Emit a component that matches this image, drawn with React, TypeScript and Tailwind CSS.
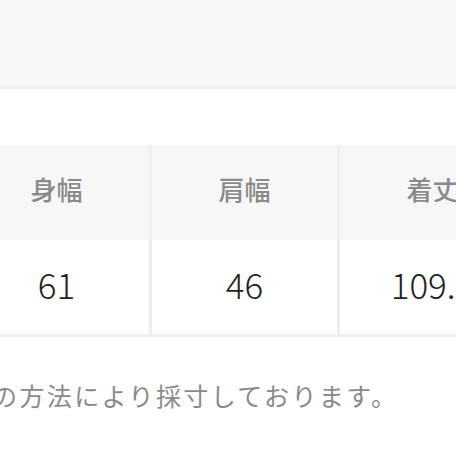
import React from "react";

const font = { fontFamily: '"Noto Sans CJK JP", "Noto Sans", sans-serif' };

export default function App() {
  const heads = ["身幅", "肩幅", "着丈"];
  const vals = ["61", "46", "109.5"];
  return (
    <div className="w-[456px] h-[456px] overflow-hidden bg-white" style={font}>
      <div className="h-[89px] bg-[#f7f7f7] border-b-[3px] border-[#efefef]" />
      <div className="h-[56px]" />
      <div className="ml-[-36px] flex flex-col">
        <div className="flex h-[95px] bg-[#f7f7f7]">
          {heads.map((h) => (
            <div
              key={h}
              className="w-[188px] shrink-0 border-r-[3px] border-[#f0f0f0] flex items-center justify-center pb-[8px] text-[26px] font-medium text-[#8a8a8a]"
            >
              {h}
            </div>
          ))}
        </div>
        <div className="flex h-[97px] border-b-[3px] border-[#efefef]">
          {vals.map((v) => (
            <div
              key={v}
              className="w-[188px] shrink-0 border-r-[3px] border-[#eeeeee] flex items-center justify-center pb-[6px] text-[35px] font-light text-[#222222]"
            >
              {v}
            </div>
          ))}
        </div>
      </div>
      <div className="mt-[38px] ml-[-8px] whitespace-nowrap text-[25px] tracking-[2.4px] leading-[40px] text-[#8a8a8a]">
        の方法により採寸しております。
      </div>
    </div>
  );
}
